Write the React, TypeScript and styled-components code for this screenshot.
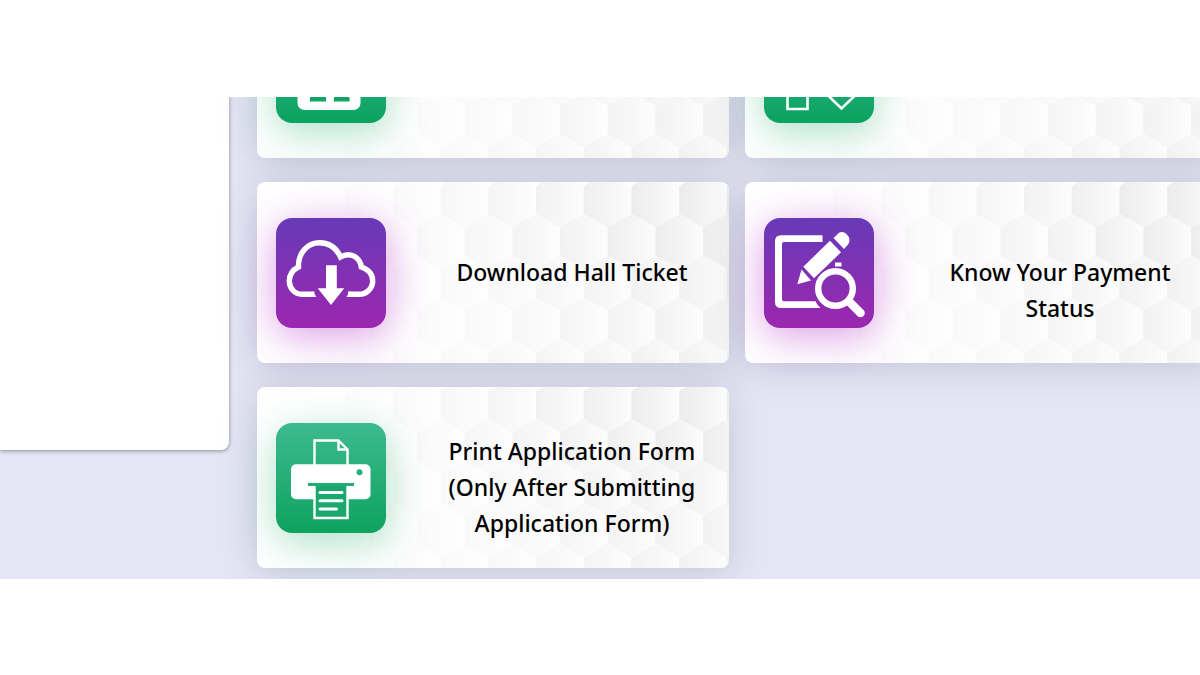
import React from 'react';
import styled, { createGlobalStyle, css } from 'styled-components';

const GlobalStyle = createGlobalStyle`
  *, *::before, *::after { box-sizing: border-box; }
  body { margin: 0; background: #fff; font-family: 'Noto Sans', 'Open Sans', sans-serif; }
`;

type Tone = 'green' | 'mint' | 'purple';

const tones = {
  green: css`
    background: linear-gradient(#3cba92, #0ba360);
    box-shadow: 0 10px 40px rgba(11, 163, 96, 0.34);
  `,
  mint: css`
    background: linear-gradient(#3dba90, #0ea25e);
    box-shadow: 0 10px 40px rgba(11, 163, 96, 0.34);
  `,
  purple: css`
    background: linear-gradient(#673ab7, #9c27b0);
    box-shadow: 0 8px 40px rgba(180, 39, 200, 0.46);
  `,
};

const Page = styled.div`
  display: flex;
  flex-direction: column;
  height: 100vh;
  padding: 97px 0 96px;
`;

const Viewport = styled.main`
  flex: 1;
  min-height: 0;
  display: flex;
  align-items: flex-end;
  overflow: hidden;
  background: #e4e6f5;
`;

const Content = styled.div`
  flex: none;
  display: flex;
  gap: 28px;
`;

const SidePanel = styled.aside`
  width: 229px;
  margin-bottom: 129px;
  background: #fff;
  border-radius: 0 8px 8px 0;
  box-shadow: 0 1px 4px rgba(0, 0, 0, 0.4);
`;

const CardGrid = styled.nav`
  display: grid;
  grid-template-columns: 1fr 1fr;
  grid-auto-rows: 181px;
  gap: 24px 16px;
  width: 80vw;
  padding-bottom: 11px;
`;

const Card = styled.a`
  position: relative;
  display: flex;
  align-items: center;
  gap: 48px;
  padding: 0 19px;
  border-radius: 8px;
  background: #fff;
  color: #000;
  text-decoration: none;
  box-shadow: 0 4px 36px rgba(60, 60, 90, 0.19);
`;

const Backdrop = styled.svg`
  position: absolute;
  inset: 0;
  width: 100%;
  height: 100%;
  border-radius: 8px;
`;

const Tile = styled.span<{ $tone: Tone }>`
  position: relative;
  flex: none;
  width: 110px;
  height: 110px;
  border-radius: 16px;
  ${({ $tone }) => tones[$tone]}
`;

const Glyph = styled.svg`
  display: block;
  width: 100%;
  height: 100%;
`;

const Label = styled.span<{ $tall?: boolean }>`
  position: relative;
  flex: 1;
  align-self: flex-start;
  margin-top: ${({ $tall }) => ($tall ? 46 : 72)}px;
  font-size: 23px;
  font-weight: 500;
  line-height: 36px;
  text-align: center;
`;

const HEX_W = 47.7;
const HEX_H = 55.6;
const ROW = 41.7;
const ROW_STRENGTH = [1, 0.95, 0.75, 0.7, 0.7];

function HexBackdrop({ id }: { id: string }) {
  const cells: React.ReactNode[] = [];
  for (let row = 0; row < 5; row++) {
    const shift = row % 2 === 0 ? 279 : 303;
    for (let col = -4; col < 5; col++) {
      const x = shift + col * HEX_W;
      const y = -10 + row * ROW;
      const strength = Math.max(0, Math.min(1, (x - 40) / 340)) * ROW_STRENGTH[row];
      cells.push(
        <polygon
          key={`${row}-${col}`}
          fill={`url(#${id})`}
          opacity={strength}
          points={[
            [x, y + HEX_H / 4],
            [x + HEX_W / 2, y],
            [x + HEX_W, y + HEX_H / 4],
            [x + HEX_W, y + (HEX_H * 3) / 4],
            [x + HEX_W / 2, y + HEX_H],
            [x, y + (HEX_H * 3) / 4],
          ].map((p) => p.join(',')).join(' ')}
        />,
      );
    }
  }
  return (
    <Backdrop viewBox="0 0 472 181" preserveAspectRatio="xMaxYMin slice" aria-hidden="true">
      <defs>
        <linearGradient id={id}>
          <stop offset="0" stopColor="#ececec" />
          <stop offset="0.5" stopColor="#f3f3f3" />
          <stop offset="1" stopColor="#fcfcfc" />
        </linearGradient>
      </defs>
      {cells}
    </Backdrop>
  );
}

const TableGlyph = () => (
  <Glyph viewBox="0 0 110 110" aria-hidden="true">
    <rect x="21.5" y="22" width="63" height="75" rx="7" fill="#fff" />
    <path d="M34 62h16v10H34zM58 62h15.500v10H58zM34 79h16v9.500H34zM58 79h15.500v9.500H58z" fill="#10a565" />
  </Glyph>
);

const ShapesGlyph = () => (
  <Glyph viewBox="0 0 110 110" fill="none" stroke="#fff" strokeWidth="2.600" aria-hidden="true">
    <path d="M23.500 68h20v28h-20zM77.500 68l14 14-14 13.500-14-13.500z" />
  </Glyph>
);

const CloudGlyph = () => (
  <Glyph viewBox="0 0 110 110" aria-hidden="true">
    <path
      d="M38.500 76.300H26C18.500 76.300 13.300 70 13.300 63C13.300 57 16.500 52 22.500 49C22 35 31.500 24.800 43.500 24.800C53 24.800 60.500 30 64.500 39C74 33.500 84 39 85.300 49C92.500 51.500 96.700 56.500 96.700 63C96.700 70.500 90.500 76.300 83 76.300H72"
      fill="none"
      stroke="#fff"
      strokeWidth="5.400"
    />
    <path d="M36 73.600H36.500L40.500 79H36zM73.500 73.600H75V79H70.500z" fill="#fff" />
    <path d="M50 47.300h10.800v23h7.500L55 87 41.700 70.300H50z" fill="#fff" />
  </Glyph>
);

const PaymentGlyph = () => (
  <Glyph viewBox="0 0 110 110" fill="#fff" aria-hidden="true">
    <path d="M58.500 17.300H17Q11 17.300 11 23.300V84Q11 90 17 90H56.500Q53 87 51.500 83.300H20Q18 83.300 18 81.300V26Q18 24 20 24H58.500z" />
    <path d="M66 22.700L77 34.300 50 60.300 39.300 48.700zM37.500 51.500L47 62.500 33.300 66.300z" />
    <path d="M69.500 20L75 14.800Q79 12.500 82.500 16L84.800 19Q86.500 23 84 26.500L80 31z" />
    <path d="M71 44.500h6.500v4H71z" />
    <circle cx="71.500" cy="70.500" r="17.300" fill="none" stroke="#fff" strokeWidth="6.400" />
    <path d="M86 84.500L96.500 95" stroke="#fff" strokeWidth="8.500" strokeLinecap="round" />
  </Glyph>
);

const PrinterGlyph = () => (
  <Glyph viewBox="0 0 110 110" fill="none" stroke="#fff" strokeWidth="2.400" aria-hidden="true">
    <path d="M38.500 43V17.500H62.500L71.500 26.500V43M62.500 17.500V26.500H71.500" />
    <rect x="15" y="41.300" width="79.500" height="35" rx="5" fill="#fff" stroke="none" />
    <circle cx="83.500" cy="49.300" r="3" fill="#28b07a" stroke="none" />
    <path d="M38.500 62V95H71.500V62" fill="#1aa96c" />
    <path d="M32 61.500H78" stroke="#22ad74" strokeWidth="3" />
    <path d="M44 69.500H66M44 77.700H66M44 86H60.500" strokeWidth="3" strokeLinecap="round" />
  </Glyph>
);

const cards: { id: string; tone: Tone; icon: React.ReactNode; name?: string; text?: string; tall?: boolean }[] = [
  { id: 'details', tone: 'green', icon: <TableGlyph />, name: 'Application details' },
  { id: 'options', tone: 'green', icon: <ShapesGlyph />, name: 'Application options' },
  { id: 'hall-ticket', tone: 'purple', icon: <CloudGlyph />, text: 'Download Hall Ticket' },
  { id: 'payment-status', tone: 'purple', icon: <PaymentGlyph />, text: 'Know Your Payment Status' },
  {
    id: 'print-form',
    tone: 'mint',
    icon: <PrinterGlyph />,
    text: 'Print Application Form (Only After Submitting Application Form)',
    tall: true,
  },
];

export default function App() {
  return (
    <>
      <GlobalStyle />
      <Page>
        <Viewport>
          <Content>
            <SidePanel />
            <CardGrid>
              {cards.map(({ id, tone, icon, name, text, tall }) => (
                <Card key={id} href={`#${id}`} aria-label={name}>
                  <HexBackdrop id={`hex-${id}`} />
                  <Tile $tone={tone}>{icon}</Tile>
                  {text && <Label $tall={tall}>{text}</Label>}
                </Card>
              ))}
            </CardGrid>
          </Content>
        </Viewport>
      </Page>
    </>
  );
}
